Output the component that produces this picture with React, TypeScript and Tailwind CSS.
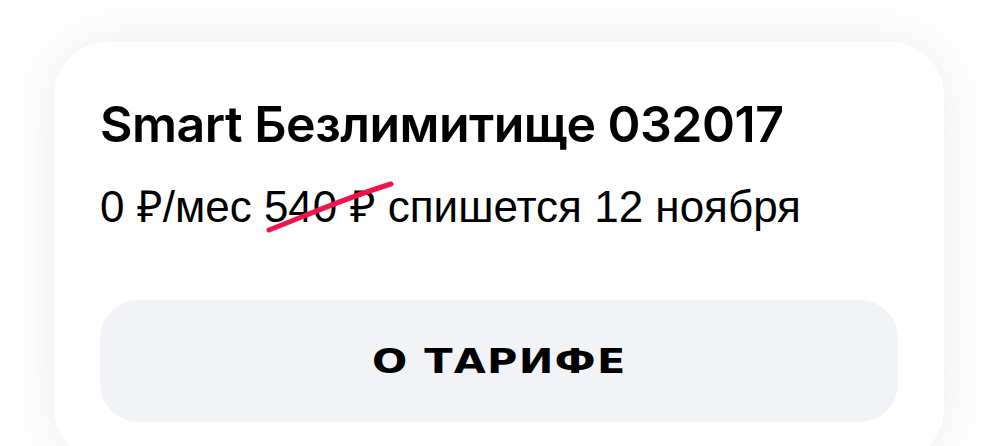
export default function App() {
  return (
    <div className="h-[446px] w-[1000px] overflow-hidden bg-white">
      <div className="ml-[54px] mt-[42px] w-[890px] rounded-[54px] bg-white px-[46px] pb-[40px] pt-[52px] shadow-[0_0_60px_rgba(0,0,0,0.08)]">
        <h1 className="text-[50px] font-semibold leading-[60px] tracking-[-0.5px] text-black [font-family:Inter,sans-serif]">
          Smart Безлимитище 032017
        </h1>
        <p className="mt-[28px] text-[44px] leading-[50px] text-black [font-family:'Liberation_Sans',Arial,sans-serif]">
          0 ₽/мес{' '}
          <span className="relative inline-block">
            540 ₽
            <svg className="absolute left-[1px] top-[-4px] overflow-visible" width="136" height="60" viewBox="0 0 136 60" fill="none">
              <path d="M4 52 C 40 38, 80 20, 126 6" stroke="#f0144b" strokeWidth="5" strokeLinecap="round" />
            </svg>
          </span>{' '}
          спишется 12 ноября
        </p>
        <button className="mt-[68px] flex h-[122px] w-full items-center justify-center rounded-[38px] bg-[#f2f3f7] text-black">
          <span className="inline-block scale-x-[1.22] text-[34px] font-black tracking-[1px] [font-family:'DejaVu_Sans',sans-serif]">
            О ТАРИФЕ
          </span>
        </button>
      </div>
    </div>
  );
}
